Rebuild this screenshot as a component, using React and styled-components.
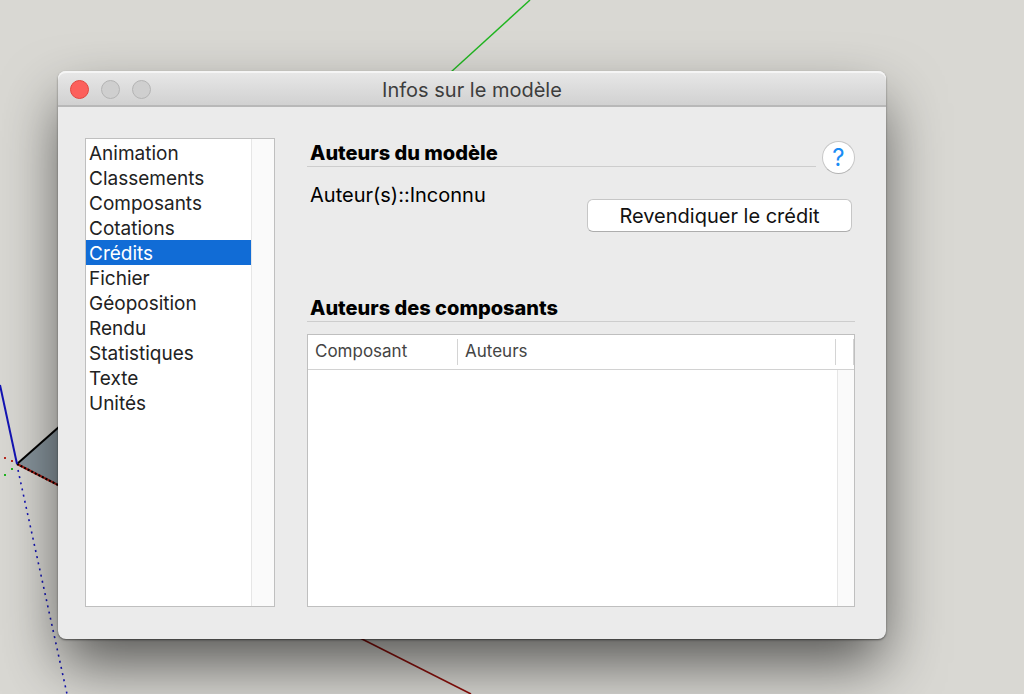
import React, { useState } from 'react';
import styled, { createGlobalStyle } from 'styled-components';

const GlobalStyle = createGlobalStyle`
  *, *::before, *::after {
    box-sizing: border-box;
  }

  body {
    margin: 0;
    background: #d9d8d3;
    color: #111;
    font-family: Inter, "Liberation Sans", sans-serif;
    font-size: 20px;
  }
`;

const Workspace = styled.div`
  position: relative;
  display: flex;
  min-height: 100vh;
  padding: 71px 138px 55px 58px;
  overflow: hidden;
`;

const ModelView = styled.svg`
  position: absolute;
  top: 0;
  left: 0;
`;

const Window = styled.main`
  position: relative;
  flex: 1;
  display: flex;
  flex-direction: column;
  min-width: 0;
  border-radius: 8px;
  background: #ebebeb;
  box-shadow:
    0 1px 2px rgba(0, 0, 0, 0.5),
    0 28px 60px -4px rgba(0, 0, 0, 0.62);
`;

const TitleBar = styled.header`
  display: grid;
  grid-template-columns: 1fr auto 1fr;
  align-items: center;
  height: 36px;
  padding: 3px 12px 0;
  border-bottom: 2px solid #b8b8b8;
  border-radius: 8px 8px 0 0;
  background: linear-gradient(#e8e8e8, #d1d1d1);
  box-shadow: inset 0 2px 0 #f5f5f5;
`;

const TrafficLights = styled.div`
  display: flex;
  gap: 12px;
`;

const Light = styled.button`
  width: 19px;
  height: 19px;
  padding: 0;
  border: 1px solid ${(props) => (props.$close ? '#e2463f' : '#b4b4b4')};
  border-radius: 50%;
  background: ${(props) => (props.$close ? '#fc605c' : '#cfcfcf')};
`;

const Title = styled.h1`
  margin: 0;
  color: #3d3d3d;
  font-size: 20px;
  font-weight: 400;
  line-height: 24px;
`;

const Content = styled.div`
  flex: 1;
  display: flex;
  gap: 32px;
  padding: 31px 31px 32px 27px;
`;

const Sidebar = styled.nav`
  display: flex;
  flex: 0 0 190px;
  border: 1px solid #bfbfbf;
  background: #fff;
`;

const SectionList = styled.ul`
  flex: 1;
  margin: 0;
  padding: 1px 0;
  list-style: none;
`;

const SectionButton = styled.button`
  display: block;
  width: 100%;
  height: 25px;
  padding: 2px 3px 0;
  border: 0;
  background: ${(props) => (props.$active ? '#116cd6' : 'transparent')};
  color: ${(props) => (props.$active ? '#fff' : '#222')};
  font: inherit;
  font-size: 19px;
  line-height: 23px;
  text-align: left;
`;

const ScrollGutter = styled.div`
  width: 23px;
  border-left: 1px solid #e6e6e6;
  background: #fafafa;
`;

const Panel = styled.section`
  flex: 1;
  display: flex;
  flex-direction: column;
  min-width: 0;
`;

const HeadingRow = styled.div`
  display: flex;
  align-items: flex-start;
  gap: 6px;
`;

const Heading = styled.h2`
  flex: 1;
  margin: 0;
  padding: 2px 0 0 3px;
  border-bottom: 1px solid #cdcdcd;
  color: #000;
  font-size: 20px;
  font-weight: 800;
  line-height: 26px;
`;

const HelpButton = styled.button`
  width: 33px;
  height: 33px;
  margin-top: 3px;
  padding: 0;
  border: 1px solid #c6c6c6;
  border-bottom-color: #b3b3b3;
  border-radius: 50%;
  background: #fff;
  color: #1a8cf5;
  font: inherit;
  font-size: 24px;
  line-height: 30px;
`;

const AuthorRow = styled.div`
  display: flex;
  align-items: flex-start;
  justify-content: space-between;
  margin: 9px 3px 61px;
`;

const AuthorText = styled.p`
  margin: 0;
  color: #000;
  line-height: 24px;
`;

const ClaimButton = styled.button`
  width: 265px;
  height: 33px;
  margin-top: 16px;
  padding: 0;
  border: 1px solid #c6c6c6;
  border-bottom-color: #adadad;
  border-radius: 6px;
  background: #fff;
  color: #111;
  font: inherit;
`;

const TableFrame = styled.div`
  flex: 1;
  display: flex;
  flex-direction: column;
  margin-top: 12px;
  border: 1px solid #bfbfbf;
  background: #fff;
`;

const AuthorsTable = styled.table`
  width: 100%;
  border-bottom: 1px solid #d2d2d2;
  border-collapse: separate;
  border-spacing: 0;
  table-layout: fixed;
`;

const ColumnHead = styled.th`
  width: ${(props) => props.$width || 'auto'};
  height: 34px;
  padding: 4px 0;
  color: #444;
  font-size: 17px;
  font-weight: 400;
  text-align: left;
`;

const HeadLabel = styled.div`
  height: 26px;
  padding-left: 7px;
  border-right: 1px solid #d4d4d4;
  line-height: 25px;
`;

const TableSpace = styled.div`
  flex: 1;
  display: flex;
  justify-content: flex-end;
`;

const TableGutter = styled(ScrollGutter)`
  width: 17px;
`;

const sections = [
  'Animation',
  'Classements',
  'Composants',
  'Cotations',
  'Crédits',
  'Fichier',
  'Géoposition',
  'Rendu',
  'Statistiques',
  'Texte',
  'Unités',
];

function ModelAxes() {
  return (
    <ModelView width="1024" height="694" aria-hidden="true" fill="none">
      <path d="M17 464 L60 426 V486 Z" fill="#87949c" />
      <path d="M17 464 L60 426" stroke="#000" strokeWidth="2" />
      <path d="M17 464 L60 486" stroke="#a81c14" strokeWidth="2" />
      <path d="M17 464 L60 486" stroke="#000" strokeWidth="2" strokeDasharray="2 2" />
      <path d="M0 385 L17 464" stroke="#1414b4" strokeWidth="2" />
      <path d="M18 470 L67 694" stroke="#1414b4" strokeWidth="1.6" strokeDasharray="2 4.3" />
      <path d="M451 72 L530 0" stroke="#1fb51f" strokeWidth="1.4" />
      <path d="M360 638 L471 694" stroke="#8c0f0a" strokeWidth="1.6" />
      <path d="M4 458h2M11 461h2" stroke="#b82a20" strokeWidth="2" />
      <path d="M4 475h2M11 469h2" stroke="#1fb51f" strokeWidth="2" />
    </ModelView>
  );
}

export default function App() {
  const [active, setActive] = useState('Crédits');

  return (
    <>
      <GlobalStyle />
      <Workspace>
        <ModelAxes />
        <Window>
          <TitleBar>
            <TrafficLights>
              <Light $close aria-label="Fermer" />
              <Light disabled aria-label="Réduire" />
              <Light disabled aria-label="Agrandir" />
            </TrafficLights>
            <Title>Infos sur le modèle</Title>
          </TitleBar>
          <Content>
            <Sidebar aria-label="Sections">
              <SectionList>
                {sections.map((name) => (
                  <li key={name}>
                    <SectionButton
                      $active={name === active}
                      aria-current={name === active}
                      onClick={() => setActive(name)}
                    >
                      {name}
                    </SectionButton>
                  </li>
                ))}
              </SectionList>
              <ScrollGutter />
            </Sidebar>
            <Panel>
              <HeadingRow>
                <Heading>Auteurs du modèle</Heading>
                <HelpButton aria-label="Aide">?</HelpButton>
              </HeadingRow>
              <AuthorRow>
                <AuthorText>Auteur(s)::Inconnu</AuthorText>
                <ClaimButton>Revendiquer le crédit</ClaimButton>
              </AuthorRow>
              <HeadingRow>
                <Heading>Auteurs des composants</Heading>
              </HeadingRow>
              <TableFrame>
                <AuthorsTable>
                  <thead>
                    <tr>
                      <ColumnHead $width="150px"><HeadLabel>Composant</HeadLabel></ColumnHead>
                      <ColumnHead><HeadLabel>Auteurs</HeadLabel></ColumnHead>
                      <ColumnHead as="td" $width="18px"><HeadLabel /></ColumnHead>
                    </tr>
                  </thead>
                </AuthorsTable>
                <TableSpace>
                  <TableGutter />
                </TableSpace>
              </TableFrame>
            </Panel>
          </Content>
        </Window>
      </Workspace>
    </>
  );
}
